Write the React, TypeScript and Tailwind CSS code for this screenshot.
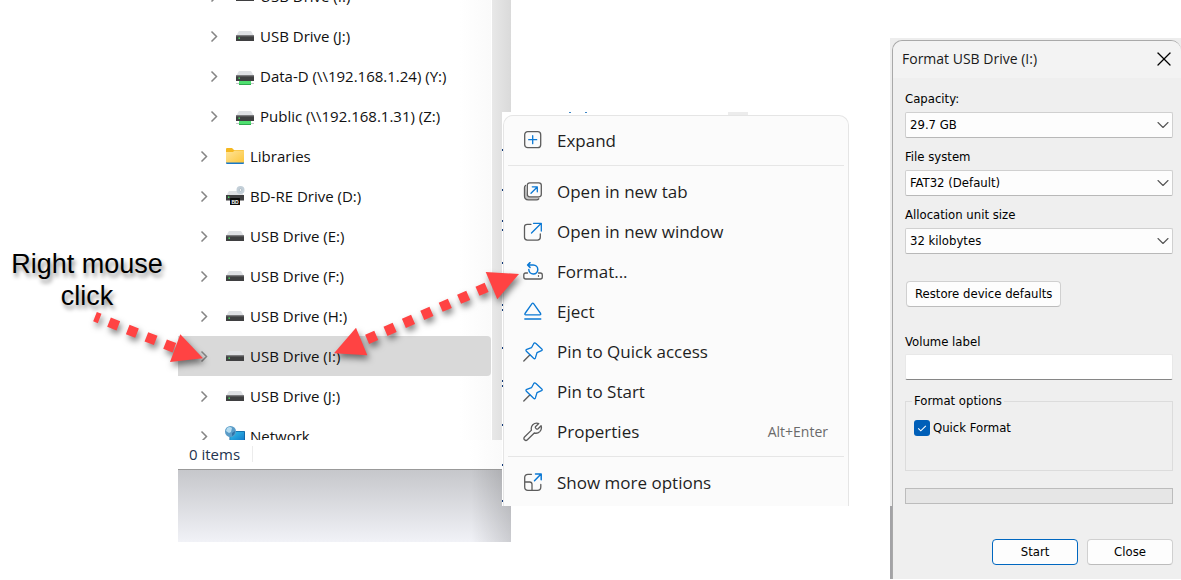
import { ReactNode } from 'react';
import { ChevronDown, X } from 'lucide-react';

const BLUE = '#0a78d4';
const GRAY = '#5c5c5c';

function DriveIcon({ network = false }: { network?: boolean }) {
  return (
    <svg viewBox="0 0 20 20" className="h-5 w-5 shrink-0">
      <path d="M4 5h12l3 5H1z" fill="#dfe1e5" />
      <rect x="1" y="9.5" width="18" height="5.5" fill="#3f3f41" />
      <rect x="1" y="9.5" width="18" height="1" fill="#6b6b6d" />
      <rect x="3.5" y="11.5" width="1.4" height="1.4" fill="#4ef06a" />
      {network && (
        <>
          <path d="M1 17.5h18" stroke="#c4c6c9" />
          <rect x="4" y="15" width="12" height="4" fill="#4fe070" />
          <rect x="4" y="18" width="12" height="1" fill="#2fa84e" />
        </>
      )}
    </svg>
  );
}

function FolderIcon() {
  return (
    <svg viewBox="0 0 20 20" className="h-5 w-5 shrink-0">
      <defs>
        <linearGradient id="folder" x1="0" y1="0" x2="1" y2="1">
          <stop offset="0" stopColor="#ffe49a" />
          <stop offset="1" stopColor="#fcc63a" />
        </linearGradient>
      </defs>
      <path d="M1 3q0-1 1-1h5l2 2h9q1 0 1 1v4H1z" fill="#f5b820" />
      <path d="M1 6h7l1.500-1.500H19V17H1z" fill="url(#folder)" />
      <path d="M1 16.500h18v.5q0 1-1 1H2q-1 0-1-1z" fill="#1878c8" />
    </svg>
  );
}

function BdDriveIcon() {
  return (
    <svg viewBox="0 0 20 20" className="h-5 w-5 shrink-0">
      <path d="M4 5h12l3 5H1z" fill="#dfe1e5" />
      <rect x="1" y="9" width="18" height="5.500" fill="#3f3f41" />
      <rect x="3" y="10.500" width="1.400" height="1.400" fill="#4ef06a" />
      <circle cx="15.500" cy="4" r="4" fill="#c3cfd8" />
      <circle cx="15.500" cy="4" r="1.300" fill="#f7f9fa" stroke="#98a7b3" strokeWidth="0.600" />
      <rect x="5" y="12" width="10" height="7" rx="0.500" fill="#0b0b0b" />
      <text x="10" y="17.500" textAnchor="middle" fontSize="5" fontWeight="bold" fill="#fff" fontFamily="Liberation Sans, sans-serif">BD</text>
    </svg>
  );
}

function NetworkIcon() {
  return (
    <svg viewBox="0 0 20 20" className="h-5 w-5 shrink-0">
      <defs>
        <linearGradient id="screen" x1="0" y1="0" x2="1" y2="1">
          <stop offset="0" stopColor="#35c3ea" />
          <stop offset="1" stopColor="#1277c9" />
        </linearGradient>
      </defs>
      <rect x="4.500" y="5" width="15.500" height="11" rx="0.800" fill="#0f5f9e" />
      <rect x="5.200" y="5.700" width="14" height="9.500" fill="url(#screen)" />
      <circle cx="5.500" cy="5.500" r="5.500" fill="#5a9cc8" />
      <path d="M2 2q3-2 5 0l-1 4-2 1-3-2z" fill="#b5dcf0" />
      <path d="M7 7l3-2q0 4-3 5z" fill="#2f74a8" />
    </svg>
  );
}

type TreeItem = { label: string; icon: ReactNode; nested?: boolean; selected?: boolean };

const TREE: TreeItem[] = [
  { label: 'USB Drive (I:)', icon: <DriveIcon />, nested: true },
  { label: 'USB Drive (J:)', icon: <DriveIcon />, nested: true },
  { label: 'Data-D (\\\\192.168.1.24) (Y:)', icon: <DriveIcon network />, nested: true },
  { label: 'Public (\\\\192.168.1.31) (Z:)', icon: <DriveIcon network />, nested: true },
  { label: 'Libraries', icon: <FolderIcon /> },
  { label: 'BD-RE Drive (D:)', icon: <BdDriveIcon /> },
  { label: 'USB Drive (E:)', icon: <DriveIcon /> },
  { label: 'USB Drive (F:)', icon: <DriveIcon /> },
  { label: 'USB Drive (H:)', icon: <DriveIcon /> },
  { label: 'USB Drive (I:)', icon: <DriveIcon />, selected: true },
  { label: 'USB Drive (J:)', icon: <DriveIcon /> },
  { label: 'Network', icon: <NetworkIcon /> },
];

function TreeRow({ label, icon, nested, selected }: TreeItem) {
  return (
    <li
      className={`flex h-10 shrink-0 items-center ${nested ? 'pl-[30px]' : 'pl-5'} ${
        selected ? 'rounded-r-sm bg-[#d9d9d9]' : ''
      }`}
    >
      <svg viewBox="0 0 12 12" className="mr-[15px] h-3 w-3 shrink-0" fill="none" stroke="#858585" strokeWidth="1.5">
        <path d="M3.500 1.500l5 5-5 5" />
      </svg>
      {icon}
      <span className="ml-[5px] whitespace-nowrap">{label}</span>
    </li>
  );
}

function Explorer() {
  return (
    <section className="-mr-[9px] flex flex-col font-['Open_Sans','Noto_Sans',sans-serif] text-[15px] text-[#111]">
      <div className="flex h-[440px] overflow-hidden">
        <ul className="-mt-6 flex grow flex-col bg-gradient-to-r from-white from-90% to-[#fafafa]">
          {TREE.map((item, i) => (
            <TreeRow key={i} {...item} />
          ))}
        </ul>
        <div className="ml-px w-[19px] bg-gradient-to-r from-[#e8e8e8] to-[#dadada]" />
      </div>
      <div className="mr-[9px] flex h-[30px] items-center border-b border-[#999] bg-gradient-to-r from-white from-90% to-[#fafafa] pl-[11px] text-[#24344f]">
        <span className="mb-px border-r border-[#ececec] pr-3 leading-4">0 items</span>
      </div>
      <div className="flex h-[72px] justify-end bg-gradient-to-b from-[#c6c7cb] to-[#f1f2f7]">
        <div className="w-10 bg-gradient-to-r from-transparent to-black/15" />
      </div>
    </section>
  );
}

function MenuSvg({ children }: { children: ReactNode }) {
  return (
    <svg viewBox="0 0 20 20" className="mr-3.5 h-5 w-5 shrink-0" fill="none" stroke={GRAY} strokeWidth="1.3" strokeLinecap="round" strokeLinejoin="round">
      {children}
    </svg>
  );
}

const ExpandIcon = (
  <MenuSvg>
    <rect x="1.700" y="0.700" width="16" height="16" rx="3" />
    <path d="M9.700 4.700v8M5.700 8.700h8" stroke={BLUE} />
  </MenuSvg>
);

const NewTabIcon = (
  <MenuSvg>
    <path d="M2.500 3.500q-1 .8-1 2.300v8.200q0 3.800 3.800 3.800h8.200q1.500 0 2.300-1l.5-1.500-11-.300-1.500-2z" fill="#c4c4c4" stroke="none" />
    <rect x="4.300" y="0.800" width="14" height="14" rx="2.500" fill="#fbfbfb" />
    <path d="M2.500 3.500q-1 .8-1 2.300v8.200q0 3.800 3.800 3.800h8.200q1.500 0 2.300-1" />
    <path d="M8 11.200l6-6M9.300 4.800h5v5" stroke={BLUE} />
  </MenuSvg>
);

const NewWindowIcon = (
  <MenuSvg>
    <path d="M8 2.300H4.300q-2.800 0-2.800 2.800v10.200q0 2.800 2.800 2.800h10.200q2.800 0 2.800-2.800V12" />
    <path d="M8.500 11l9.500-9.500M10.500 1.300h7.800v7.800" stroke={BLUE} />
  </MenuSvg>
);

const FormatIcon = (
  <MenuSvg>
    <path d="M4.500 11H2.800q-2 0-2 2v2q0 2 2 2h14.500q2 0 2-2v-2q0-2-2-2H15.500" />
    <path d="M15.500 13.700v.6" />
    <path d="M4.800 3h5.500a4.500 4.500 0 1 1-4.500 4.600M7 .6L4.600 3 7 5.400" stroke={BLUE} strokeWidth="1.500" />
  </MenuSvg>
);

const EjectIcon = (
  <MenuSvg>
    <path d="M9 1.700q.8-1 1.600 0l7 9.800q.6 1.300-.8 1.300h-14q-1.400 0-.8-1.300zM1.800 17h16" stroke={BLUE} />
  </MenuSvg>
);

const PinIcon = (
  <MenuSvg>
    <path d="M.8 19l6-6" />
    <path
      d="M10.800 1.500q.9-1.200 1.900-.2l6.100 5.600q1 1-.3 1.700L14 10.700l-1.600 5.200q-.6 1.500-1.800.4L3.400 9.200q-1.100-1.200.4-1.800L8.500 5.700z"
      stroke={BLUE}
    />
  </MenuSvg>
);

const WrenchIcon = (
  <MenuSvg>
    <path d="M15.800 1.600q-3.400-1.200-6 1.200-2.200 2.300-1.300 5.300L1.500 15q-1.200 1.400 0 2.800 1.500 1.300 2.900 0l6.900-6.800q3.200.9 5.500-1.400 2.400-2.600 1.300-5.900l-3 3q-.9.700-1.800 0l-.6-.6q-.7-.9 0-1.700z" />
  </MenuSvg>
);

const MoreIcon = (
  <MenuSvg>
    <path d="M8.500 1.300H5q-3.300 0-3.300 3.300V14q0 3.300 3.300 3.300h9.500q3.300 0 3.300-3.300v-2.500M1.700 9h5q2.300 0 2.300 2.300v6" />
    <path d="M11.500 7.800l6.300-6.500M12.500 1h5.700v5.700" stroke={BLUE} strokeWidth="1.500" />
  </MenuSvg>
);

function MenuItem({ icon, label, shortcut }: { icon: ReactNode; label: string; shortcut?: string }) {
  return (
    <button role="menuitem" className="flex h-10 w-full items-center pr-5 pl-[19px] text-left whitespace-nowrap">
      {icon}
      <span className="grow">{label}</span>
      {shortcut && <span className="text-sm text-[#6a6a6a]">{shortcut}</span>}
    </button>
  );
}

function MenuDivider() {
  return <hr className="mx-1 mt-1 mb-1.5 border-[#e6e6e6]" />;
}

// rows of the window behind the menu that peek out along its left edge
const PEEKS = [37, 77, 108, 117, 150, 192, 197, 235, 268, 273, 312, 352, 388];

function ContextMenu() {
  return (
    <div className="relative z-10 mt-28 mr-[41px] self-start bg-white pl-px">
      <svg className="absolute top-0 left-0 h-full w-px">
        {PEEKS.map((y) => (
          <rect key={y} y={y} width="1" height="2" fill="#123a78" />
        ))}
      </svg>
      <div className="flex h-[3px] pl-[66px]">
        <span className="h-px w-0.5 bg-[#3d86c6]" />
        <span className="ml-3.5 h-px w-0.5 bg-[#3d86c6]" />
        <span className="ml-[141px] w-5 bg-[#ececec]" />
      </div>
      <div
        role="menu"
        className="rounded-t-[10px] border border-b-0 border-[#e5e5e5] bg-[#fbfbfb] pt-[5px] pb-[3px] font-['Open_Sans','Noto_Sans',sans-serif] text-[17px] text-[#1f1f1f]"
      >
        <MenuItem icon={ExpandIcon} label="Expand" />
        <MenuDivider />
        <MenuItem icon={NewTabIcon} label="Open in new tab" />
        <MenuItem icon={NewWindowIcon} label="Open in new window" />
        <MenuItem icon={FormatIcon} label="Format..." />
        <MenuItem icon={EjectIcon} label="Eject" />
        <MenuItem icon={PinIcon} label="Pin to Quick access" />
        <MenuItem icon={PinIcon} label="Pin to Start" />
        <MenuItem icon={WrenchIcon} label="Properties" shortcut="Alt+Enter" />
        <MenuDivider />
        <MenuItem icon={MoreIcon} label="Show more options" />
      </div>
    </div>
  );
}

function SelectField({ id, label, value }: { id: string; label: string; value: string }) {
  return (
    <div className="flex flex-col gap-[5px]">
      <label htmlFor={id}>{label}</label>
      <div className="relative">
        <select
          id={id}
          className="block h-[26px] w-full appearance-none rounded-xs border border-[#d0d0d0] border-b-[#b8b8b8] bg-[#fdfdfd] px-1"
        >
          <option>{value}</option>
        </select>
        <ChevronDown className="pointer-events-none absolute top-[3px] right-0 h-5 w-5 text-[#555]" strokeWidth={1.3} />
      </div>
    </div>
  );
}

function FormatDialog() {
  return (
    <div className="mt-[38px] self-start bg-gradient-to-b from-[#ededed] from-[468px] to-[#a3a3a6] to-[468px] pt-0.5 pl-0.5">
      <div
        role="dialog"
        aria-labelledby="dialog-title"
        className="rounded-t-[10px] border-t border-l border-[#a9a9a9] bg-[#efefef] font-['DejaVu_Sans_Condensed','Noto_Sans',sans-serif] text-[13px] leading-4 text-black"
      >
        <header className="flex h-[37px] items-center justify-between rounded-t-[10px] bg-[#f3f3f3] pr-[5px] pb-0.5 pl-[9px]">
          <h1 id="dialog-title" className="font-['Open_Sans','Noto_Sans',sans-serif] text-sm text-[#1a1a1a]">
            Format USB Drive (I:)
          </h1>
          <button aria-label="Close dialog">
            <X className="h-6 w-6" strokeWidth={1.3} />
          </button>
        </header>
        <form className="pt-[13px] pr-2 pb-3.5 pl-3" onSubmit={(e) => e.preventDefault()}>
          <div className="flex flex-col gap-[11px]">
            <SelectField id="capacity" label="Capacity:" value="29.7 GB" />
            <SelectField id="filesystem" label="File system" value="FAT32 (Default)" />
            <SelectField id="allocation" label="Allocation unit size" value="32 kilobytes" />
          </div>
          <button type="button" className="mt-[27px] ml-px block h-[26px] rounded border border-[#d0d0d0] border-b-[#bcbcbc] bg-[#fdfdfd] px-2">
            Restore device defaults
          </button>
          <div className="mt-[27px] flex flex-col gap-1">
            <label htmlFor="volume">Volume label</label>
            <input id="volume" type="text" className="h-[26px] rounded-xs border border-[#e8e8e8] border-b-[#868686] bg-white px-1" />
          </div>
          <fieldset className="mt-[13px] h-[78px] border border-[#dcdcdc] px-2">
            <legend className="-ml-0.5 px-0.5">Format options</legend>
            <label className="mt-[11px] flex items-center gap-[3px]">
              <span className="relative h-4 w-4">
                <input type="checkbox" defaultChecked className="block h-4 w-4 appearance-none rounded-[3px] bg-[#005fb8]" />
                <svg viewBox="0 0 16 16" className="pointer-events-none absolute inset-0" fill="none" stroke="#fff" strokeWidth="1.1">
                  <path d="M4.200 8.300l2.600 2.500 5-5" />
                </svg>
              </span>
              Quick Format
            </label>
          </fieldset>
          <div role="progressbar" aria-label="Format progress" aria-valuenow={0} className="mt-[17px] h-4 border border-[#bcbcbc] bg-[#e6e6e6]" />
          <div className="mt-[35px] flex justify-end gap-[9px]">
            <button type="submit" className="h-[26px] w-[86px] rounded border border-[#0067c0] bg-[#fdfdfd]">
              Start
            </button>
            <button type="button" className="h-[26px] w-[86px] rounded border border-[#d0d0d0] border-b-[#bcbcbc] bg-[#fdfdfd]">
              Close
            </button>
          </div>
        </form>
      </div>
    </div>
  );
}

function Arrows() {
  return (
    <svg viewBox="0 0 1181 580" className="pointer-events-none absolute top-0 left-0 z-20 w-full drop-shadow-[2px_4px_3px_rgba(0,0,0,0.5)]">
      <g stroke="#ff4343" strokeWidth="10" fill="none">
        <path d="M95 316.700L178 349.200" strokeDasharray="10 10.060" strokeDashoffset="5" />
        <path d="M367.100 339.300L488 286.700" strokeDasharray="10 10.060" />
      </g>
      <g fill="#ff4343">
        <path d="M203 358.300L180.300 334.300 170 362z" />
        <path d="M334 353.300L356 327.700 367.300 355.300z" />
        <path d="M519 274L485.700 272 497.300 299.300z" />
      </g>
    </svg>
  );
}

export default function App() {
  return (
    <main className="relative grid min-h-screen grid-cols-[178fr_324fr_388fr_291fr] items-start overflow-hidden bg-white">
      <p className="mt-[248px] pr-1 text-center font-['Liberation_Sans',Arial,sans-serif] text-[27px] leading-8 text-black [text-shadow:2px_4px_4px_rgba(0,0,0,0.45)]">
        Right mouse
        <br />
        click
      </p>
      <Explorer />
      <ContextMenu />
      <FormatDialog />
      <Arrows />
    </main>
  );
}
